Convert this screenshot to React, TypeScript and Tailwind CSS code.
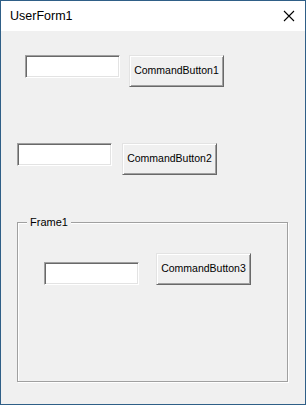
import React from 'react';

const TextBox: React.FC<{ className?: string }> = ({ className = '' }) => (
  <div
    className={`w-[95px] h-[23px] bg-white border border-t-[#a0a0a0] border-l-[#a0a0a0] border-r-white border-b-white shadow-[inset_1px_1px_0_#696969,inset_-1px_-1px_0_#e3e3e3] ${className}`}
  />
);

const CommandButton: React.FC<{ label: string }> = ({ label }) => (
  <button
    type="button"
    className="w-[95px] h-[32px] bg-[#f0f0f0] border border-t-[#e3e3e3] border-l-[#e3e3e3] border-r-[#696969] border-b-[#696969] shadow-[inset_1px_1px_0_#ffffff,inset_-1px_-1px_0_#a0a0a0] text-[10.5px] text-black flex items-center justify-center"
  >
    {label}
  </button>
);

export default function App() {
  return (
    <div
      className="w-[306px] h-[405px] flex flex-col border border-[#2f5f87] bg-[#f0f0f0] overflow-hidden"
      style={{ fontFamily: '"Liberation Sans", Arial, sans-serif' }}
    >
      {/* Title bar */}
      <div className="h-[30px] shrink-0 bg-white flex items-center justify-between pl-[9px] pr-[9px]">
        <span className="text-[12.5px] text-black">UserForm1</span>
        <svg width="12" height="12" viewBox="0 0 12 12" className="mr-[1px]">
          <path d="M1 1 L11 11 M11 1 L1 11" stroke="#000" strokeWidth="1.1" fill="none" />
        </svg>
      </div>

      {/* Form body */}
      <div className="flex-1 flex flex-col">
        <div className="flex items-start gap-[9px] pl-[24px] mt-[24px]">
          <TextBox />
          <CommandButton label="CommandButton1" />
        </div>

        <div className="flex items-start gap-[10px] pl-[16px] mt-[56px]">
          <TextBox className="w-[94px]" />
          <CommandButton label="CommandButton2" />
        </div>

        {/* Frame1 */}
        <div className="relative ml-[16px] mt-[47px] w-[271px] h-[160px] border border-[#a0a0a0] shadow-[inset_1px_1px_0_#ffffff,1px_1px_0_#ffffff]">
          <span className="absolute -top-[8px] left-[9px] px-[3px] bg-[#f0f0f0] text-[11px] leading-[14px] text-black">
            Frame1
          </span>
          <div className="flex items-start gap-[17px] pl-[26px] pt-[30px]">
            <TextBox className="mt-[9px] w-[94px]" />
            <CommandButton label="CommandButton3" />
          </div>
        </div>
      </div>
    </div>
  );
}
